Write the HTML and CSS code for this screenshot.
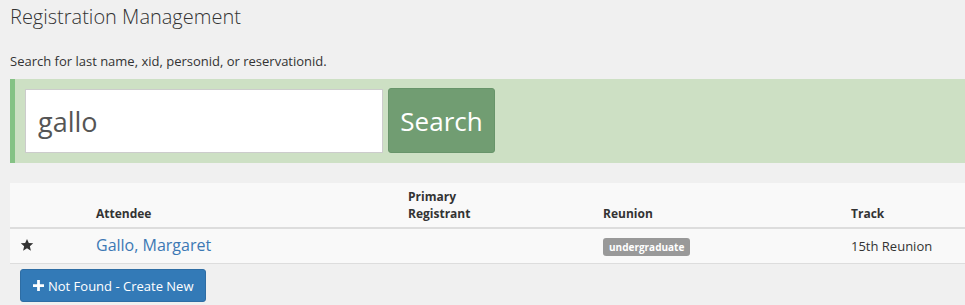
FILE: index.html
```html
<!DOCTYPE html>
<html lang="en">
<head>
  <meta charset="UTF-8">
  <title>Registration Management</title>
  <link rel="stylesheet" href="styles.css">
</head>
<body>

<div class="page">
  <h1>Registration Management</h1>
  <p class="hint">Search for last name, xid, personid, or reservationid.</p>

  <!-- SEARCH PANEL -->
  <form class="search-panel" onsubmit="event.preventDefault();">
    <input type="text" class="search-input" value="gallo">
    <button type="submit" class="search-btn">Search</button>
  </form>

  <!-- RESULTS -->
  <table class="results">
    <colgroup>
      <col style="width:81px">
      <col style="width:312px">
      <col style="width:195px">
      <col style="width:248px">
      <col>
    </colgroup>
    <thead>
      <tr>
        <th></th>
        <th>Attendee</th>
        <th>Primary<br>Registrant</th>
        <th>Reunion</th>
        <th>Track</th>
      </tr>
    </thead>
    <tbody>
      <tr>
        <td class="star-cell">
          <svg class="star" viewBox="0 0 24 24" width="14" height="14"><path d="M12 1.5l3.1 7.1 7.6.6-5.8 5 1.8 7.5L12 17.7l-6.7 4 1.8-7.5-5.8-5 7.6-.6z"/></svg>
        </td>
        <td><a href="#" class="name-link">Gallo, Margaret</a></td>
        <td></td>
        <td><span class="badge">undergraduate</span></td>
        <td class="track">15th Reunion</td>
      </tr>
    </tbody>
  </table>

  <button type="button" class="create-btn">
    <svg viewBox="0 0 12 12" width="11" height="11"><path d="M4.5 0h3v4.5H12v3H7.5V12h-3V7.5H0v-3h4.5z"/></svg>
    Not Found - Create New
  </button>
</div>

</body>
</html>
```

FILE: styles.css
```css
body { margin: 0; background: #f0f0f0; font-family: "Open Sans", "Liberation Sans", sans-serif; color: #333; overflow: hidden; }
.page { padding: 0 0 0 10px; }
h1 { font-weight: 300; font-size: 20px; line-height: 22px; margin: 0; padding-top: 6px; color: #333; }
.hint { font-size: 13px; margin: 0; padding-top: 25px; line-height: 17px; }
.search-panel {
  display: flex;
  align-items: flex-start;
  margin-top: 9px;
  height: 64px;
  padding: 10px 10px 10px 10px;
  background: #cde0c4;
  border-left: 5px solid #85c285;
}
.search-input {
  width: 358px;
  height: 64px;
  box-sizing: border-box;
  border: 1px solid #ccc;
  border-radius: 0;
  padding: 0 12px;
  font-family: inherit;
  font-size: 27px;
  color: #555;
  background: #fff;
  outline: none;
}
.search-btn {
  margin-left: 5px;
  width: 107px;
  height: 65px;
  margin-top: -1px;
  background: #719d72;
  border: 1px solid #68946a;
  border-radius: 3px;
  color: #fff;
  font-family: inherit;
  font-size: 26px;
}
.results {
  margin-top: 20px;
  width: 955px;
  table-layout: fixed;
  border-collapse: collapse;
  background: #f9f9f9;
}
.results th {
  text-align: left;
  vertical-align: bottom;
  font-size: 12px;
  line-height: 17px;
  padding: 5px;
  border-bottom: 2px solid #ddd;
  color: #333;
}
.results td {
  padding: 5px;
  vertical-align: middle;
  border-bottom: 1px solid #ddd;
  font-size: 13px;
  line-height: 23px;
}
.results .star-cell { padding-left: 10px; padding-bottom: 7px; }
.star { fill: #333; display: block; }
.name-link { color: #3c78b4; text-decoration: none; font-size: 16px; }
.badge {
  display: inline-block;
  background: #999;
  color: #fff;
  font-weight: bold;
  font-size: 10px;
  line-height: 12px;
  padding: 3px 6px 3px;
  border-radius: 3px;
  vertical-align: middle;
}
.track { color: #333; }
.create-btn {
  display: flex;
  align-items: center;
  gap: 4px;
  margin: 5px 0 0 10px;
  height: 33px;
  padding: 0 12px;
  background: #337ab7;
  border: 1px solid #2e6da4;
  border-radius: 3px;
  color: #fff;
  font-family: inherit;
  font-size: 13px;
}
.create-btn svg { fill: #fff; }
```
